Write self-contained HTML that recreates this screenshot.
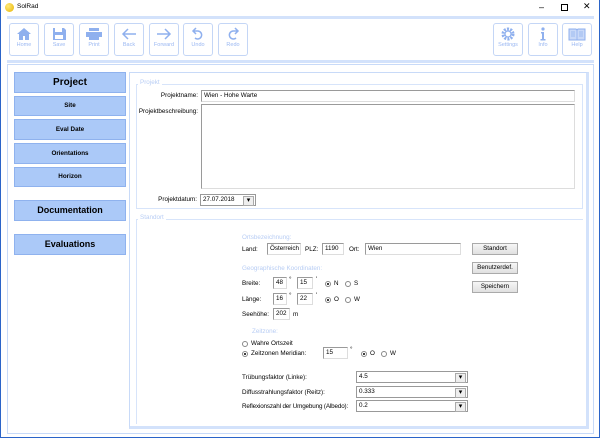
<!DOCTYPE html><html><head><meta charset="utf-8"><style>
*{box-sizing:border-box;margin:0;padding:0}
body{width:600px;height:438px;overflow:hidden;background:#fff;font-family:"Liberation Sans",sans-serif;font-size:6.3px;color:#000;position:relative}
.a{position:absolute;white-space:nowrap}
.tb{position:absolute;top:23px;width:30px;height:33px;border:1px solid #c4d6f6;border-radius:3px;background:#fff;text-align:center;color:#9bb8f2;font-size:5.5px}
.tb svg{display:block;margin:3px auto 1px}
.nav{position:absolute;left:14px;width:112px;background:#abc9f8;border:1px solid #8fb2ee;text-align:center;font-weight:bold}
.in{position:absolute;height:12px;border:1px solid #9a9a9a;border-right-color:#ddd;border-bottom-color:#ddd;background:#fff;padding-left:2px;line-height:10px;white-space:nowrap;overflow:hidden}
.btn{position:absolute;left:472px;width:46px;height:12px;border:1px solid #aaa;background:linear-gradient(#f6f6f6,#e0e0e0);text-align:center;line-height:10px}
.lb{position:absolute;color:#b8cdf4;white-space:nowrap}
.sel{position:absolute;height:12px;border:1px solid #999;background:#fff;padding-left:2px;line-height:10px}
.sel:after{content:"▾";position:absolute;right:1px;top:1px;width:9px;height:8px;border:1px solid #aaa;background:#eee;font-size:7px;line-height:7px;text-align:center}
.r{position:absolute;width:6px;height:6px;border:1px solid #888;border-radius:50%;background:#fff}
.r.on:after{content:"";position:absolute;left:1px;top:1px;width:2px;height:2px;background:#000;border-radius:50%}
.rt{position:absolute;text-align:right;white-space:nowrap}
</style></head><body>
<div class="a" style="left:0;top:0;width:600px;height:438px;border:1px solid #2b64c8;border-top:none"></div>
<div class="a" style="left:5px;top:3px;width:9px;height:9px;border-radius:50%;background:radial-gradient(circle at 35% 35%,#ffe97a,#e8b400)"></div>
<div class="a" style="left:17px;top:3px;font-size:6.5px">SolRad</div>
<div class="a" style="left:539px;top:2px;font-size:9px">–</div>
<div class="a" style="left:561px;top:4px;width:7px;height:7px;border:1px solid #000"></div>
<div class="a" style="left:583px;top:1px;font-size:9px">✕</div>
<div class="a" style="left:7px;top:16px;width:587px;height:3px;background:#d3e2fb"></div>
<div class="a" style="left:7px;top:60px;width:587px;height:3px;background:#d3e2fb"></div>
<div class="tb" style="left:9px"><svg width="16" height="14" viewBox="0 0 16 14"><path d="M8 1L1 7h2v6h4V9h2v4h4V7h2z" fill="#8fb0ee"/></svg>Home</div>
<div class="tb" style="left:44px"><svg width="16" height="14" viewBox="0 0 16 14"><path d="M2 1h11l2 2v10H2z" fill="#8fb0ee"/><rect x="4" y="1" width="7" height="4" fill="#fff"/><rect x="4" y="8" width="8" height="4" fill="#fff"/></svg>Save</div>
<div class="tb" style="left:79px"><svg width="18" height="14" viewBox="0 0 18 14"><rect x="4" y="1" width="10" height="3" fill="#8fb0ee"/><rect x="1" y="5" width="16" height="5" fill="#8fb0ee"/><rect x="4" y="10" width="10" height="3" fill="#8fb0ee"/></svg>Print</div>
<div class="tb" style="left:114px"><svg width="18" height="14" viewBox="0 0 18 14"><path d="M16 7H3M8 2L3 7l5 5" stroke="#8fb0ee" stroke-width="1.5" fill="none"/></svg>Back</div>
<div class="tb" style="left:149px"><svg width="18" height="14" viewBox="0 0 18 14"><path d="M2 7h13M10 2l5 5-5 5" stroke="#8fb0ee" stroke-width="1.5" fill="none"/></svg>Forward</div>
<div class="tb" style="left:183px"><svg width="16" height="14" viewBox="0 0 16 14"><path d="M6 1L3 4l3 3M3 4h5a4 4 0 1 1-3 7" stroke="#8fb0ee" stroke-width="1.5" fill="none"/></svg>Undo</div>
<div class="tb" style="left:218px"><svg width="16" height="14" viewBox="0 0 16 14"><path d="M10 1l3 3-3 3M13 4H8a4 4 0 1 0 3 7" stroke="#8fb0ee" stroke-width="1.5" fill="none"/></svg>Redo</div>
<div class="tb" style="left:493px"><svg width="16" height="14" viewBox="0 0 16 14"><circle cx="8" cy="7" r="5" stroke="#8fb0ee" stroke-width="3" stroke-dasharray="2 1.2" fill="none"/><circle cx="8" cy="7" r="3" stroke="#8fb0ee" stroke-width="1.2" fill="none"/></svg>Settings</div>
<div class="tb" style="left:528px"><svg width="16" height="14" viewBox="0 0 16 14"><circle cx="8" cy="2" r="1.6" fill="#8fb0ee"/><path d="M6 5h3v7h1.5v1.5h-5V12H7V6.5H6z" fill="#8fb0ee"/></svg>Info</div>
<div class="tb" style="left:562px"><svg width="18" height="14" viewBox="0 0 18 14"><path d="M1 2h7l1 1 1-1h7v11H1z" fill="#c9d9f8" stroke="#8fb0ee"/><path d="M9 3v10M3 5h4M3 7h4M3 9h4M11 5h4M11 7h4M11 9h4" stroke="#8fb0ee" stroke-width=".8"/></svg>Help</div>
<div class="a" style="left:7px;top:64px;width:587px;height:370px;border:1px solid #c8daf8"></div>
<div class="nav" style="top:72px;height:21px;line-height:19px;font-size:10px">Project</div>
<div class="nav" style="top:96px;height:20px;line-height:18px">Site</div>
<div class="nav" style="top:119px;height:21px;line-height:19px">Eval Date</div>
<div class="nav" style="top:143px;height:21px;line-height:19px">Orientations</div>
<div class="nav" style="top:167px;height:20px;line-height:18px">Horizon</div>
<div class="nav" style="top:200px;height:21px;line-height:19px;font-size:9px">Documentation</div>
<div class="nav" style="top:234px;height:21px;line-height:19px;font-size:9px">Evaluations</div>
<div class="a" style="left:129px;top:72px;width:460px;height:357px;border:1px solid #c8daf8;border-right:3px solid #d3e2fb;border-bottom:3px solid #d3e2fb"></div>
<div class="a" style="left:136px;top:84px;width:447px;height:125px;border:1px solid #d7e4fa"></div>
<div class="a" style="left:138px;top:79px;background:#fff;padding:0 2px;color:#b8cdf4">Projekt</div>
<div class="rt" style="right:402px;top:92px">Projektname:</div>
<div class="in" style="left:201px;top:90px;width:374px">Wien - Hohe Warte</div>
<div class="rt" style="right:402px;top:108px">Projektbeschreibung:</div>
<div class="in" style="left:201px;top:104px;width:374px;height:85px"></div>
<div class="rt" style="right:403px;top:196px">Projektdatum:</div>
<div class="sel" style="left:200px;top:194px;width:56px">27.07.2018</div>
<div class="a" style="left:136px;top:219px;width:447px;height:205px;border-top:1px solid #d7e4fa;border-left:1px solid #d7e4fa"></div>
<div class="a" style="left:138px;top:214px;background:#fff;padding:0 2px;color:#b8cdf4">Standort</div>
<div class="lb" style="left:242px;top:234px">Ortsbezeichnung:</div>
<div class="a" style="left:242px;top:246px">Land:</div>
<div class="in" style="left:267px;top:243px;width:34px">Österreich</div>
<div class="a" style="left:305px;top:246px">PLZ:</div>
<div class="in" style="left:322px;top:243px;width:22px">1190</div>
<div class="a" style="left:349px;top:246px">Ort:</div>
<div class="in" style="left:365px;top:243px;width:96px">Wien</div>
<div class="btn" style="top:243px">Standort</div>
<div class="btn" style="top:262px">Benutzerdef.</div>
<div class="btn" style="top:281px">Speichern</div>
<div class="lb" style="left:242px;top:265px">Geographische Koordinaten:</div>
<div class="a" style="left:242px;top:280px">Breite:</div>
<div class="in" style="left:273px;top:277px;width:14px">48</div>
<div class="a" style="left:289px;top:276px">°</div>
<div class="in" style="left:297px;top:277px;width:16px">15</div>
<div class="a" style="left:316px;top:276px">'</div>
<div class="r on" style="left:325px;top:281px"></div><div class="a" style="left:334px;top:280px">N</div>
<div class="r" style="left:345px;top:281px"></div><div class="a" style="left:354px;top:280px">S</div>
<div class="a" style="left:242px;top:296px">Länge:</div>
<div class="in" style="left:273px;top:293px;width:14px">16</div>
<div class="a" style="left:289px;top:292px">°</div>
<div class="in" style="left:297px;top:293px;width:16px">22</div>
<div class="a" style="left:316px;top:292px">'</div>
<div class="r on" style="left:325px;top:297px"></div><div class="a" style="left:334px;top:296px">O</div>
<div class="r" style="left:345px;top:297px"></div><div class="a" style="left:354px;top:296px">W</div>
<div class="a" style="left:242px;top:311px">Seehöhe:</div>
<div class="in" style="left:273px;top:308px;width:17px">202</div>
<div class="a" style="left:293px;top:311px">m</div>
<div class="lb" style="left:252px;top:328px">Zeitzone:</div>
<div class="r" style="left:242px;top:341px"></div><div class="a" style="left:251px;top:340px">Wahre Ortszeit</div>
<div class="r on" style="left:242px;top:351px"></div><div class="a" style="left:251px;top:350px">Zeitzonen Meridian:</div>
<div class="in" style="left:323px;top:347px;width:25px">15</div>
<div class="a" style="left:350px;top:346px">°</div>
<div class="r on" style="left:361px;top:351px"></div><div class="a" style="left:370px;top:350px">O</div>
<div class="r" style="left:381px;top:351px"></div><div class="a" style="left:390px;top:350px">W</div>
<div class="a" style="left:242px;top:374px">Trübungsfaktor (Linke):</div>
<div class="sel" style="left:356px;top:371px;width:112px">4.5</div>
<div class="a" style="left:242px;top:389px">Diffusstrahlungsfaktor (Reitz):</div>
<div class="sel" style="left:356px;top:386px;width:112px">0.333</div>
<div class="a" style="left:242px;top:403px;letter-spacing:-0.15px">Reflexionszahl der Umgebung (Albedo):</div>
<div class="sel" style="left:356px;top:400px;width:112px">0.2</div>
</body></html>
